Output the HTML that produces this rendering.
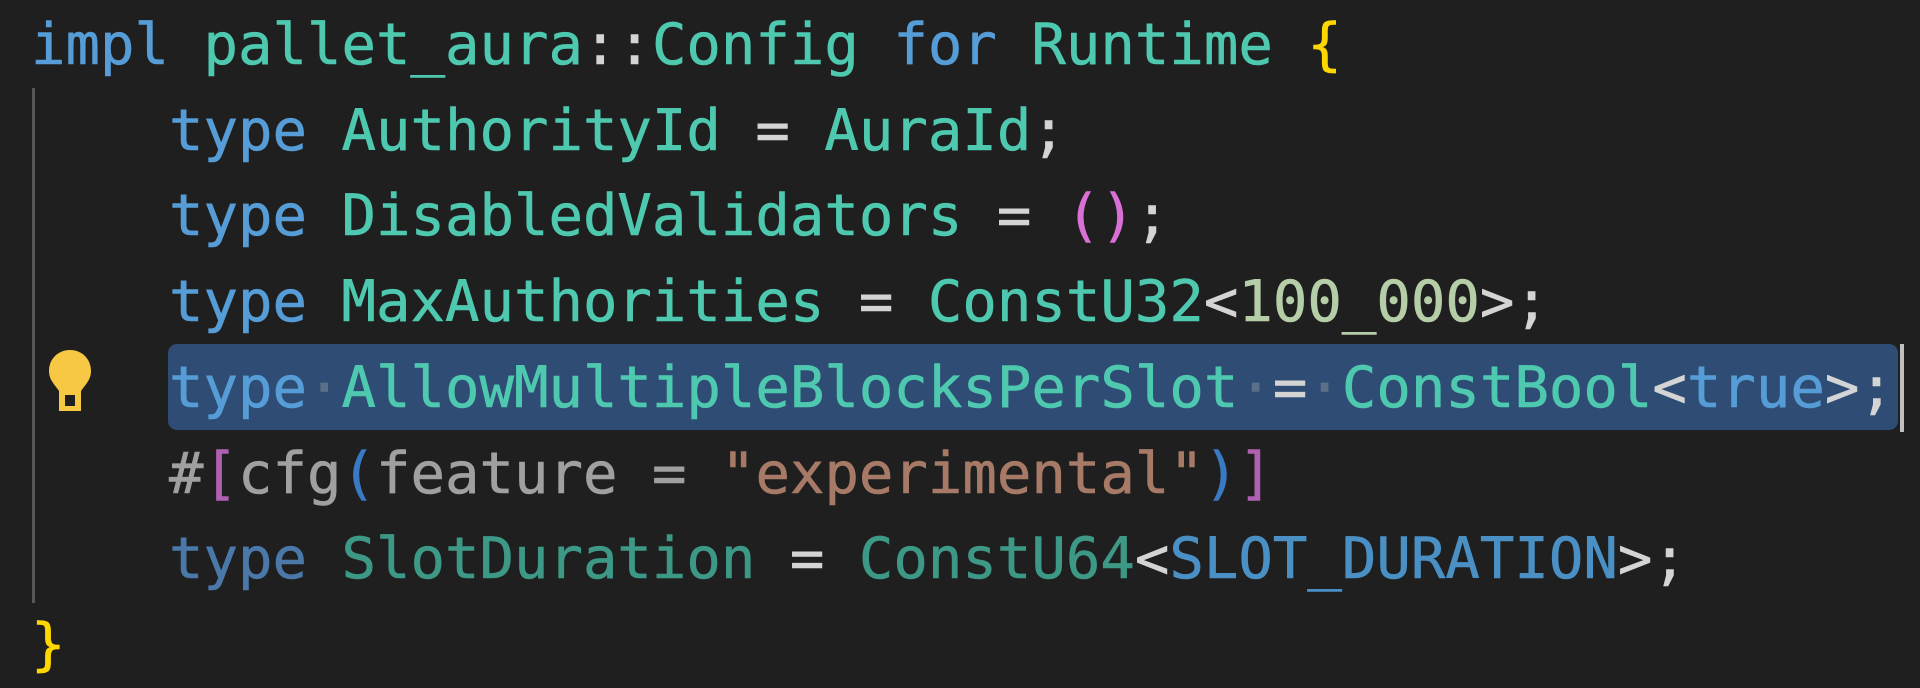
<!DOCTYPE html>
<html><head><meta charset="utf-8"><style>
html,body{margin:0;padding:0;width:1920px;height:678px;overflow:hidden;background:#1f1f1f;}
.code{position:absolute;left:31px;top:2px;font-family:"DejaVu Sans Mono","Liberation Mono",monospace;font-size:57.3px;line-height:85.7px;white-space:pre;color:#d4d4d4;-webkit-text-stroke:0.6px currentColor;}
.k{color:#569cd6}.t{color:#4ec9b0}.n{color:#b5cea8}.p{color:#d4d4d4}.y{color:#ffd700}.m{color:#da70d6}
.s{color:#ce9178}.g{color:#a0a0a0}.d{color:#5b7088}
.dim .k{color:#4a78a8}.dim .t{color:#3d9886}
.sel{position:absolute;left:168px;top:344px;width:1730px;height:86px;background:#2f4d74;border-radius:9px;}
.guide{position:absolute;left:32px;top:88px;width:3px;height:515px;background:#585858;}
.cursor{position:absolute;left:1900px;top:344px;width:4px;height:88px;background:#c0c0c0;}
</style></head><body>
<div class="guide"></div>
<div class="sel"></div>
<div class="cursor"></div>
<svg style="position:absolute;left:46px;top:348px" width="48" height="66" viewBox="0 0 48 66">
<path d="M24 2C12 2 3 11 3 23c0 9 6 14 10 20v20h22V43c4-6 10-11 10-20C45 11 36 2 24 2z" fill="#f7c843"/>
<rect x="19" y="47" width="10" height="11" fill="#1f1f1f"/>
</svg>
<div class="code"><span class="k">impl</span> <span class="t">pallet_aura</span><span class="p">::</span><span class="t">Config</span> <span class="k">for</span> <span class="t">Runtime</span> <span class="y">{</span>
    <span class="k">type</span> <span class="t">AuthorityId</span> = <span class="t">AuraId</span>;
    <span class="k">type</span> <span class="t">DisabledValidators</span> = <span class="m">()</span>;
    <span class="k">type</span> <span class="t">MaxAuthorities</span> = <span class="t">ConstU32</span>&lt;<span class="n">100_000</span>&gt;;
    <span class="k">type</span><span class="d">·</span><span class="t">AllowMultipleBlocksPerSlot</span><span class="d">·</span>=<span class="d">·</span><span class="t">ConstBool</span>&lt;<span class="k">true</span>&gt;;
    <span class="g">#</span><span style="color:#b060b0">[</span><span class="g">cfg</span><span style="color:#3a7ac4">(</span><span class="g">feature = </span><span style="color:#a67a66">"experimental"</span><span style="color:#3a7ac4">)</span><span style="color:#b060b0">]</span>
<span class="dim">    <span class="k">type</span> <span class="t">SlotDuration</span> = <span class="t">ConstU64</span>&lt;<span style="color:#4a90c4">SLOT_DURATION</span>&gt;;</span>
<span class="y">}</span></div>
</body></html>
